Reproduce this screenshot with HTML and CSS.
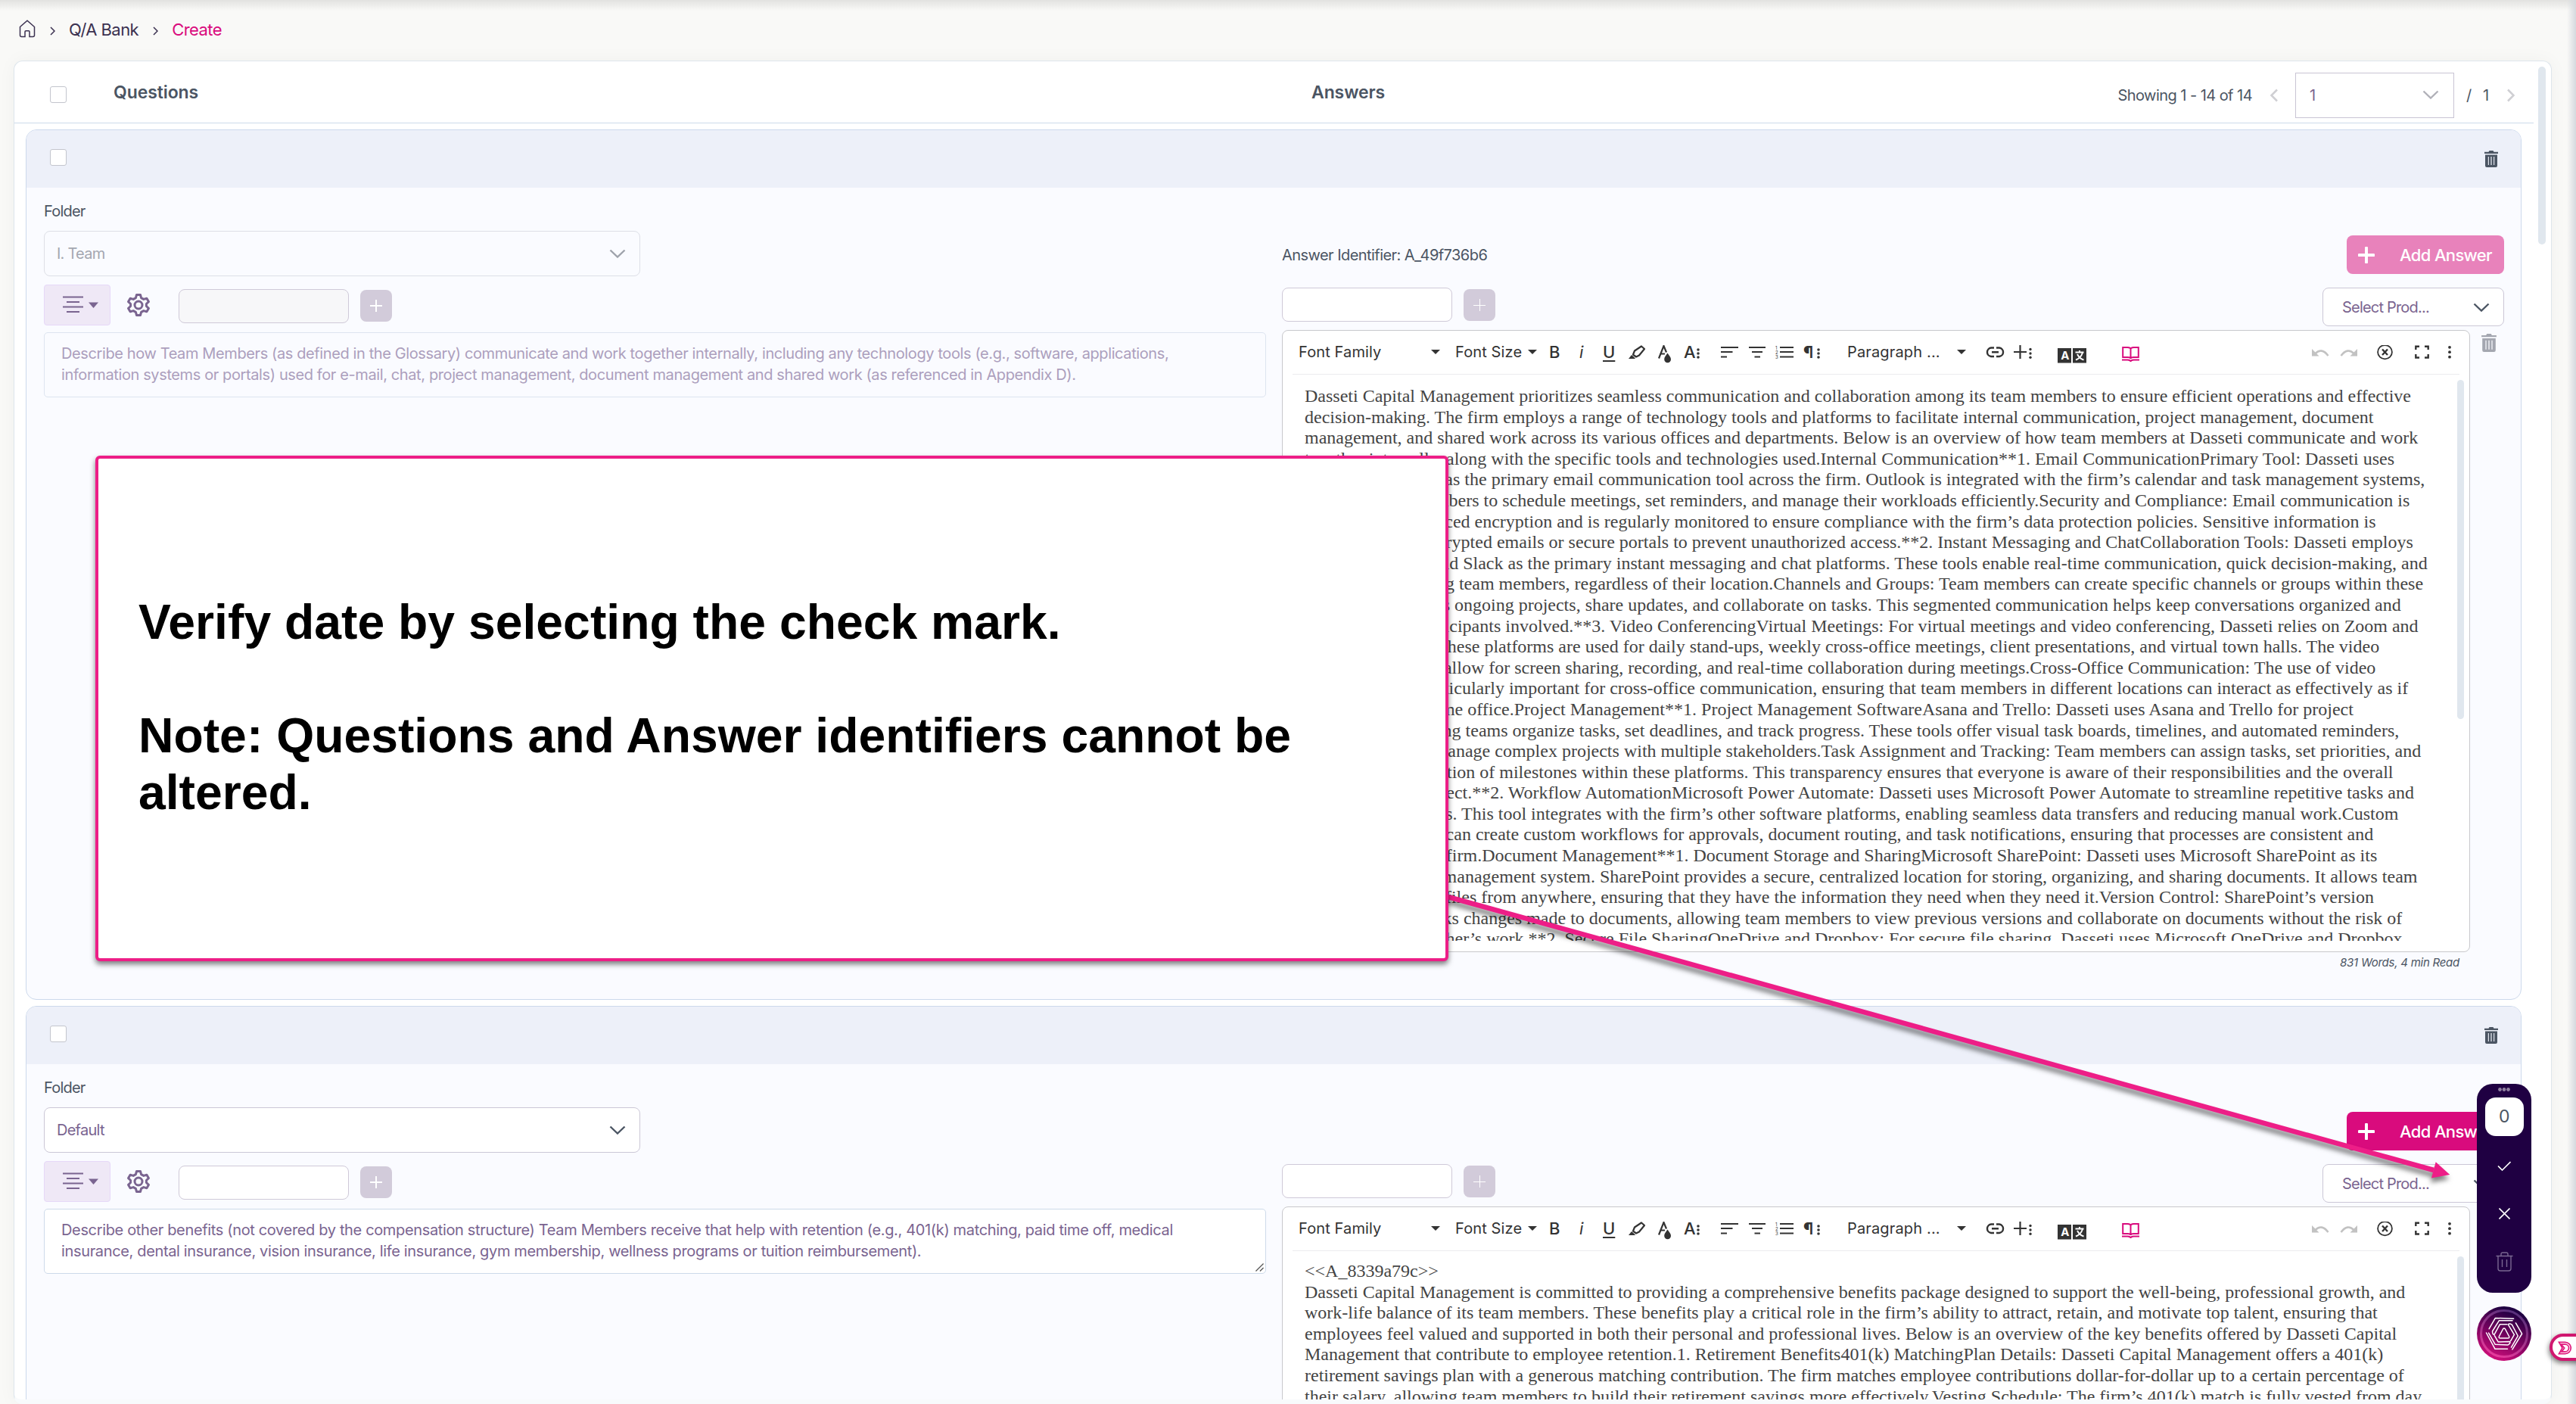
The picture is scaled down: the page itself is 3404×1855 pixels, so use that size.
FILE: index.html
```html
<!DOCTYPE html>
<html lang="en">
<head>
    <meta charset="UTF-8">
    <meta name="viewport" content="width=device-width, initial-scale=1.0">
    <title>Q/A Bank - Create</title>
    <link rel="stylesheet" href="styles.css">
</head>
<body>
    <!-- icons used more than once -->
    <svg class="sprite">
        <symbol id="i-chevron" viewBox="0 0 22 12"><path d="M1.5 1.5L11 10.5L20.5 1.5"/></symbol>
        <symbol id="i-list" viewBox="0 0 47 22">
            <path d="M0 1.5H27M5 8H22M0 14.5H27M5 21H22" stroke="#7a6490" stroke-width="2"/>
            <path d="M34 8.5H47L40.5 16Z" fill="#7a6490"/>
        </symbol>
        <symbol id="i-gear" viewBox="0 0 30 30">
            <path d="M12.5 1.5H17.5L18.6 5.6L21.8 7.4L25.9 6.3L28.4 10.6L25.4 13.5V16.5L28.4 19.4L25.9 23.7L21.8 22.6L18.6 24.4L17.5 28.5H12.5L11.4 24.4L8.2 22.6L4.1 23.7L1.6 19.4L4.6 16.5V13.5L1.6 10.6L4.1 6.3L8.2 7.4L11.4 5.6Z" stroke-linejoin="round"/>
            <circle cx="15" cy="15" r="5"/>
        </symbol>
        <symbol id="i-trash" viewBox="0 0 20 22" preserveAspectRatio="none">
            <path d="M1 1.8H6.5L7.5 0H12.5L13.5 1.8H19V4H1Z"/>
            <path fill-rule="evenodd" d="M2 5.5H18V20Q18 22 16 22H4Q2 22 2 20ZM5.8 8V19H6.9V8ZM9.4 8V19H10.6V8ZM13.1 8V19H14.2V8Z"/>
        </symbol>
        <symbol id="i-caret" viewBox="0 0 12 6"><path d="M0 0H12L6 6Z" fill="#333"/></symbol>
        <symbol id="i-pen" viewBox="0 0 23 24">
            <path d="M0 18L4 13L9 17.5L8 18Z" fill="#333"/>
            <path d="M6 12.5L8 7.5L17 1.5L21 5L14 13.5L10 15.5Z" fill="none" stroke="#333" stroke-width="2.2" stroke-linejoin="round"/>
        </symbol>
        <symbol id="i-drop" viewBox="0 0 17 24">
            <path d="M1 17.5L7.5 1L11 9.5M3.5 11.5H9" fill="none" stroke="#333" stroke-width="2.2"/>
            <path d="M12.5 10.5C10 14 8.2 16 8.2 18.8A4.4 4.4 0 0 0 17 18.8C17 16 15 14 12.5 10.5Z" fill="#333"/>
        </symbol>
        <symbol id="i-dots3" viewBox="0 0 4 18"><circle cx="2" cy="6" r="1.8"/><circle cx="2" cy="11" r="1.8"/><circle cx="2" cy="16" r="1.8"/></symbol>
        <symbol id="i-left" viewBox="0 0 23 24"><path d="M0 3H23M0 9H15.5M0 15.5H8" stroke="#333" stroke-width="2.2"/></symbol>
        <symbol id="i-center" viewBox="0 0 22 24"><path d="M0 3H22M4 9H18M7.5 15.5H15" stroke="#333" stroke-width="2.2"/></symbol>
        <symbol id="i-num" viewBox="0 0 24 24">
            <path d="M6 3H24M6 9H24M6 15.5H24" stroke="#333" stroke-width="2.2"/>
            <text x="0" y="5.5" font-size="6">1</text><text x="0" y="11.7" font-size="6">2</text><text x="0" y="18" font-size="6">3</text>
        </symbol>
        <symbol id="i-link" viewBox="0 0 25 24">
            <path d="M11 3.5H7A5.8 5.8 0 0 0 7 15H11M14 3.5H18A5.8 5.8 0 0 1 18 15H14M8 9.2H17" fill="none" stroke="#333" stroke-width="2.4"/>
        </symbol>
        <symbol id="i-plusdots" viewBox="0 0 24 24">
            <path d="M8.5 0V18M0 9H17" stroke="#333" stroke-width="2.2"/>
            <g fill="#333"><circle cx="22" cy="5.5" r="1.7"/><circle cx="22" cy="11" r="1.7"/><circle cx="22" cy="16.2" r="1.7"/></g>
        </symbol>
        <symbol id="i-translate" viewBox="0 0 38 24">
            <rect x="0" y="4" width="18" height="19.5" fill="#333"/><rect x="20" y="4" width="18" height="19.5" fill="#333"/>
            <text x="4.2" y="19" font-size="15" font-weight="700" fill="#fff">A</text>
            <path d="M23.5 9.5H34.5M29 7V9.5M33 10C31.5 14.5 28 18 24 19.5M26 12C28 16 31 18.5 34.5 19.5" fill="none" stroke="#fff" stroke-width="1.9"/>
        </symbol>
        <symbol id="i-book" viewBox="0 0 23 24">
            <path d="M1.2 3H7.5Q11.5 3 11.5 5.5Q11.5 3 15.5 3H21.8V16H15.5Q11.5 16 11.5 18Q11.5 16 7.5 16H1.2ZM11.5 5V18M0 19.5H7.5Q11.5 19.5 11.5 22Q11.5 19.5 15.5 19.5H23" fill="none" stroke="#d90b7d" stroke-width="2"/>
        </symbol>
        <symbol id="i-undo" viewBox="0 0 23 24">
            <path d="M4 11.5Q13 2.5 21.5 14" fill="none" stroke="#c2c2c2" stroke-width="2.6"/><path d="M0 5V14.5H9.5Z" fill="#c2c2c2"/>
        </symbol>
        <symbol id="i-clear" viewBox="0 0 21 24">
            <ellipse cx="10.5" cy="9.2" rx="9.4" ry="9.2" fill="none" stroke="#333" stroke-width="1.8"/>
            <path d="M7 5.5L14 13M14 5.5L7 13" stroke="#333" stroke-width="2.4"/>
        </symbol>
        <symbol id="i-full" viewBox="0 0 19 24"><path d="M1.3 6V1.8H6M13 1.8H17.7V6M17.7 12V16.5H13M6 16.5H1.3V12" fill="none" stroke="#333" stroke-width="2.4"/></symbol>
        <symbol id="i-more" viewBox="0 0 4 24"><circle cx="2" cy="2.8" r="1.9"/><circle cx="2" cy="9.2" r="1.9"/><circle cx="2" cy="15.7" r="1.9"/></symbol>
    </svg>

    <nav class="breadcrumb">
        <svg class="home" viewBox="0 0 22 24"><path d="M1.5 9.5L11 1.2L20.5 9.5V20.5Q20.5 22.5 18.5 22.5H14V16Q14 14.8 12.8 14.8H9.2Q8 14.8 8 16V22.5H3.5Q1.5 22.5 1.5 20.5Z"/></svg>
        <svg class="sep" viewBox="0 0 7 12"><path d="M1 1L6 6L1 11"/></svg>
        <span>Q/A Bank</span>
        <svg class="sep" viewBox="0 0 7 12"><path d="M1 1L6 6L1 11"/></svg>
        <span class="current">Create</span>
    </nav>

    <main class="panel">
        <header class="list-head">
            <span class="check"></span>
            <h2 class="head-questions">Questions</h2>
            <h2 class="head-answers">Answers</h2>
            <div class="pager">
                <span class="showing">Showing 1 - 14 of 14</span>
                <svg class="page-arrow" viewBox="0 0 12 18"><path d="M10 1.5L2.5 9L10 16.5"/></svg>
                <div class="page-select"><span>1</span><svg class="chevron"><use href="#i-chevron"/></svg></div>
                <span class="page-total">/&nbsp; &nbsp;1</span>
                <svg class="page-arrow next" viewBox="0 0 12 18"><path d="M2 1.5L9.5 9L2 16.5"/></svg>
            </div>
        </header>

        <section class="card disabled">
            <div class="card-head">
                <span class="check"></span>
                <svg class="trash"><use href="#i-trash"/></svg>
            </div>
            <div class="card-body">
                <div class="question">
                    <label>Folder</label>
                    <div class="folder-select"><span>I. Team</span><svg class="chevron"><use href="#i-chevron"/></svg></div>
                    <div class="q-tools">
                        <span class="list-btn"><svg><use href="#i-list"/></svg></span>
                        <svg class="gear"><use href="#i-gear"/></svg>
                        <span class="tag-input"></span>
                        <span class="tag-add"></span>
                    </div>
                    <div class="q-text">Describe how Team Members (as defined in the Glossary) communicate and work together internally, including any technology tools (e.g., software, applications,<br>information systems or portals) used for e-mail, chat, project management, document management and shared work (as referenced in Appendix D).</div>
                </div>
                <div class="answer">
                    <div class="a-top">
                        <span class="identifier">Answer Identifier: A_49f736b6</span>
                        <span class="add-answer"><svg viewBox="0 0 22 22"><path d="M11 1.5V20.5M1.5 11H20.5"/></svg>Add Answer</span>
                    </div>
                    <div class="a-tools">
                        <span class="tag-input"></span>
                        <span class="tag-add thin"></span>
                        <span class="product-select">Select Prod...<svg class="chevron"><use href="#i-chevron"/></svg></span>
                    </div>
                    <div class="editor-row">
                        <div class="editor">
                            <div class="toolbar">
                                <span class="t-family">Font Family<svg class="caret"><use href="#i-caret"/></svg></span>
                                <span class="t-size">Font Size<svg class="caret"><use href="#i-caret"/></svg></span>
                                <b class="t-b">B</b><i class="t-i">i</i><u class="t-u">U</u>
                                <svg class="t-pen"><use href="#i-pen"/></svg>
                                <svg class="t-drop"><use href="#i-drop"/></svg>
                                <span class="t-a">A<svg><use href="#i-dots3"/></svg></span>
                                <svg class="t-left"><use href="#i-left"/></svg>
                                <svg class="t-center"><use href="#i-center"/></svg>
                                <svg class="t-num"><use href="#i-num"/></svg>
                                <span class="t-a t-para">&para;<svg><use href="#i-dots3"/></svg></span>
                                <span class="t-format">Paragraph ...<svg class="caret"><use href="#i-caret"/></svg></span>
                                <svg class="t-link"><use href="#i-link"/></svg>
                                <svg class="t-plus"><use href="#i-plusdots"/></svg>
                                <svg class="t-trans"><use href="#i-translate"/></svg>
                                <svg class="t-book"><use href="#i-book"/></svg>
                                <svg class="t-undo"><use href="#i-undo"/></svg>
                                <svg class="t-redo"><use href="#i-undo"/></svg>
                                <svg class="t-clear"><use href="#i-clear"/></svg>
                                <svg class="t-full"><use href="#i-full"/></svg>
                                <svg class="t-more"><use href="#i-more"/></svg>
                            </div>
                            <div class="editor-body">
                                <p>Dasseti Capital Management prioritizes seamless communication and collaboration among its team members to ensure efficient operations and effective<br>
                                decision-making. The firm employs a range of technology tools and platforms to facilitate internal communication, project management, document<br>
                                management, and shared work across its various offices and departments. Below is an overview of how team members at Dasseti communicate and work<br>
                                together internally, along with the specific tools and technologies used.Internal Communication**1. Email CommunicationPrimary Tool: Dasseti uses<br>
                                Microsoft Outlook as the primary email communication tool across the firm. Outlook is integrated with the firm’s calendar and task management systems,<br>
                                allowing team members to schedule meetings, set reminders, and manage their workloads efficiently.Security and Compliance: Email communication is<br>
                                secured with advanced encryption and is regularly monitored to ensure compliance with the firm’s data protection policies. Sensitive information is<br>
                                delivered using encrypted emails or secure portals to prevent unauthorized access.**2. Instant Messaging and ChatCollaboration Tools: Dasseti employs<br>
                                Microsoft Teams and Slack as the primary instant messaging and chat platforms. These tools enable real-time communication, quick decision-making, and<br>
                                collaboration among team members, regardless of their location.Channels and Groups: Team members can create specific channels or groups within these<br>
                                platforms to discuss ongoing projects, share updates, and collaborate on tasks. This segmented communication helps keep conversations organized and<br>
                                available to all participants involved.**3. Video ConferencingVirtual Meetings: For virtual meetings and video conferencing, Dasseti relies on Zoom and<br>
                                Microsoft Teams. These platforms are used for daily stand-ups, weekly cross-office meetings, client presentations, and virtual town halls. The video<br>
                                conferencing tools allow for screen sharing, recording, and real-time collaboration during meetings.Cross-Office Communication: The use of video<br>
                                conferencing is particularly important for cross-office communication, ensuring that team members in different locations can interact as effectively as if<br>
                                they were in the same office.Project Management**1. Project Management SoftwareAsana and Trello: Dasseti uses Asana and Trello for project<br>
                                management, helping teams organize tasks, set deadlines, and track progress. These tools offer visual task boards, timelines, and automated reminders,<br>
                                making it easy to manage complex projects with multiple stakeholders.Task Assignment and Tracking: Team members can assign tasks, set priorities, and<br>
                                monitor the completion of milestones within these platforms. This transparency ensures that everyone is aware of their responsibilities and the overall<br>
                                progress of the project.**2. Workflow AutomationMicrosoft Power Automate: Dasseti uses Microsoft Power Automate to streamline repetitive tasks and<br>
                                staff work processes. This tool integrates with the firm’s other software platforms, enabling seamless data transfers and reducing manual work.Custom<br>
                                Workflows: Teams can create custom workflows for approvals, document routing, and task notifications, ensuring that processes are consistent and<br>
                                efficient across the firm.Document Management**1. Document Storage and SharingMicrosoft SharePoint: Dasseti uses Microsoft SharePoint as its<br>
                                primary document management system. SharePoint provides a secure, centralized location for storing, organizing, and sharing documents. It allows team<br>
                                members to access files from anywhere, ensuring that they have the information they need when they need it.Version Control: SharePoint’s version<br>
                                control feature tracks changes made to documents, allowing team members to view previous versions and collaborate on documents without the risk of<br>
                                overwriting each other’s work.**2. Secure File SharingOneDrive and Dropbox: For secure file sharing, Dasseti uses Microsoft OneDrive and Dropbox</p>
                                <span class="scroll"></span>
                            </div>
                        </div>
                        <svg class="trash side"><use href="#i-trash"/></svg>
                    </div>
                    <div class="words">831 Words, 4 min Read</div>
                </div>
            </div>
        </section>

        <section class="card">
            <div class="card-head">
                <span class="check"></span>
                <svg class="trash"><use href="#i-trash"/></svg>
            </div>
            <div class="card-body">
                <div class="question">
                    <label>Folder</label>
                    <div class="folder-select"><span>Default</span><svg class="chevron"><use href="#i-chevron"/></svg></div>
                    <div class="q-tools">
                        <span class="list-btn"><svg><use href="#i-list"/></svg></span>
                        <svg class="gear"><use href="#i-gear"/></svg>
                        <span class="tag-input"></span>
                        <span class="tag-add"></span>
                    </div>
                    <div class="q-text">Describe other benefits (not covered by the compensation structure) Team Members receive that help with retention (e.g., 401(k) matching, paid time off, medical<br>insurance, dental insurance, vision insurance, life insurance, gym membership, wellness programs or tuition reimbursement).
                        <svg class="grip" viewBox="0 0 12 12"><path d="M0.5 11.5L11.5 0.5M6.5 11.5L11.5 6.5"/></svg>
                    </div>
                </div>
                <div class="answer">
                    <div class="a-top">
                        <span class="identifier"></span>
                        <span class="add-answer"><svg viewBox="0 0 22 22"><path d="M11 1.5V20.5M1.5 11H20.5"/></svg>Add Answer</span>
                    </div>
                    <div class="a-tools">
                        <span class="tag-input"></span>
                        <span class="tag-add thin"></span>
                        <span class="product-select">Select Prod...<svg class="chevron"><use href="#i-chevron"/></svg></span>
                    </div>
                    <div class="editor-row">
                        <div class="editor">
                            <div class="toolbar">
                                <span class="t-family">Font Family<svg class="caret"><use href="#i-caret"/></svg></span>
                                <span class="t-size">Font Size<svg class="caret"><use href="#i-caret"/></svg></span>
                                <b class="t-b">B</b><i class="t-i">i</i><u class="t-u">U</u>
                                <svg class="t-pen"><use href="#i-pen"/></svg>
                                <svg class="t-drop"><use href="#i-drop"/></svg>
                                <span class="t-a">A<svg><use href="#i-dots3"/></svg></span>
                                <svg class="t-left"><use href="#i-left"/></svg>
                                <svg class="t-center"><use href="#i-center"/></svg>
                                <svg class="t-num"><use href="#i-num"/></svg>
                                <span class="t-a t-para">&para;<svg><use href="#i-dots3"/></svg></span>
                                <span class="t-format">Paragraph ...<svg class="caret"><use href="#i-caret"/></svg></span>
                                <svg class="t-link"><use href="#i-link"/></svg>
                                <svg class="t-plus"><use href="#i-plusdots"/></svg>
                                <svg class="t-trans"><use href="#i-translate"/></svg>
                                <svg class="t-book"><use href="#i-book"/></svg>
                                <svg class="t-undo"><use href="#i-undo"/></svg>
                                <svg class="t-redo"><use href="#i-undo"/></svg>
                                <svg class="t-clear"><use href="#i-clear"/></svg>
                                <svg class="t-full"><use href="#i-full"/></svg>
                                <svg class="t-more"><use href="#i-more"/></svg>
                            </div>
                            <div class="editor-body second">
                                <p>&lt;&lt;A_8339a79c&gt;&gt;<br>
                                Dasseti Capital Management is committed to providing a comprehensive benefits package designed to support the well-being, professional growth, and<br>
                                work-life balance of its team members. These benefits play a critical role in the firm’s ability to attract, retain, and motivate top talent, ensuring that<br>
                                employees feel valued and supported in both their personal and professional lives. Below is an overview of the key benefits offered by Dasseti Capital<br>
                                Management that contribute to employee retention.1. Retirement Benefits401(k) MatchingPlan Details: Dasseti Capital Management offers a 401(k)<br>
                                retirement savings plan with a generous matching contribution. The firm matches employee contributions dollar-for-dollar up to a certain percentage of<br>
                                their salary, allowing team members to build their retirement savings more effectively.Vesting Schedule: The firm’s 401(k) match is fully vested from day</p>
                                <span class="scroll"></span>
                            </div>
                        </div>
                    </div>
                </div>
            </div>
        </section>
        <span class="page-scroll"></span>
    </main>

    <div class="edge-shade"></div>

    <!-- floating review actions -->
    <aside class="actions">
        <svg class="grab" viewBox="0 0 16 5"><circle cx="2.5" cy="2.5" r="2.4"/><circle cx="8" cy="2.5" r="2.4"/><circle cx="13.5" cy="2.5" r="2.4"/></svg>
        <span class="count">0</span>
        <svg class="act-check" viewBox="0 0 18 13"><path d="M1 6.5L6.5 12L17.5 1"/></svg>
        <svg class="act-close" viewBox="0 0 15 15"><path d="M0.5 0.5L14.5 14.5M14.5 0.5L0.5 14.5"/></svg>
        <svg class="act-trash" viewBox="0 0 23 26"><path d="M0.5 5.5H22.5M7 5.5V3Q7 1 9 1H14Q16 1 16 3V5.5M3 5.5V22Q3 25 6 25H17Q20 25 20 22V5.5M8.5 10V20M14.5 10V20"/></svg>
    </aside>
    <svg class="logo" viewBox="-36 -36 72 72">
        <defs>
            <linearGradient id="lg" x1="0.7" y1="0" x2="0.3" y2="1"><stop offset="0.1" stop-color="#1f0042"/><stop offset="0.55" stop-color="#7a0260"/><stop offset="1" stop-color="#d4107c"/></linearGradient>
            <linearGradient id="ring" x1="0.7" y1="0" x2="0.3" y2="1"><stop offset="0" stop-color="#54307a"/><stop offset="1" stop-color="#e83a9c"/></linearGradient>
            <g id="arm">
                <path d="M-23.5 -1L-12 20.3H4.5"/>
                <path d="M11 -17.3H-6.5L-15.5 -3Q-15.5 1.3 -13 1.3L-5.5 -12.3H4"/>
            </g>
        </defs>
        <circle r="36" fill="url(#lg)"/>
        <circle r="30.5" fill="none" stroke="url(#ring)" stroke-width="3"/>
        <g fill="none" stroke="#fff" stroke-width="1.5" stroke-linejoin="round" stroke-linecap="round">
            <use href="#arm"/><use href="#arm" transform="rotate(120)"/><use href="#arm" transform="rotate(240)"/>
            <path d="M0 -7Q1 -7 1.500 -6L6.500 3.500Q7.500 6 5 6H-5Q-7.500 6 -6.500 3.500L-1.500 -6Q-1 -7 0 -7Z"/>
        </g>
    </svg>
    <div class="side-badge">
        <svg viewBox="0 0 22 20"><path d="M1 1.5H10A8.5 8.5 0 0 1 10 18.5H1L6 10ZM4 4.5H10A5.5 5.5 0 0 1 10 15.5H5L9 10Z"/></svg>
    </div>

    <!-- annotation -->
    <svg class="arrow" viewBox="0 0 3404 1855">
        <path class="line" d="M1910 1184L3216 1546"/>
        <path class="tip" d="M3234 1551L3215 1554.5L3219.500 1538Z"/>
    </svg>
    <div class="callout">
        <p>Verify date by selecting the check mark.</p>
        <p>Note: Questions and Answer identifiers cannot be altered.</p>
    </div>
</body>
</html>
```

FILE: styles.css
```css
*{
    box-sizing: border-box;
}
body{
    margin: 0;
    height: 1855px;
    overflow: hidden;
    background: linear-gradient(#e2e2e0, #f9f9f7 14px);
    font-family: Inter, "Liberation Sans", sans-serif;
    font-size: 20px;
    line-height: 24px;
    letter-spacing: -0.55px;
    color: #4b5563;
    position: relative;
}
.sprite{
    display: none;
}
svg{
    display: block;
    flex: none;
}
h2, p{
    margin: 0;
}

/* breadcrumb */
.breadcrumb{
    height: 80px;
    padding: 0 0 2px 25px;
    display: flex;
    align-items: center;
    font-size: 22px;
    letter-spacing: -0.55px;
    color: #3b3150;
}
.breadcrumb svg{
    fill: none;
    stroke: #3b3150;
    stroke-width: 1.5;
}
.home{
    width: 22px;
    height: 24px;
    margin-top: -3px;
}
.breadcrumb .sep{
    width: 7px;
    height: 12px;
    margin: 4px 18.5px 0;
}
.current{
    color: #d90b7d;
}

/* panel */
.panel{
    position: relative;
    margin-left: 18px;
    width: 3354px;
    height: 1775px;
    padding-left: 15px;
    background: #fff;
    border: 1px solid #dde5ec;
    border-bottom: 6px solid #f8fafc;
    border-radius: 12px;
    box-shadow: 0 0 24px rgba(0,0,0,0.04);
    overflow: hidden;
}
.list-head{
    height: 82px;
    width: 3329px;
    margin-left: -15px;
    padding: 0 24px 0 47px;
    display: flex;
    align-items: center;
    border-bottom: 1px solid #cddaea;
}
.check{
    width: 22px;
    height: 22px;
    border: 1px solid #c3c5cd;
    border-radius: 3px;
    background: #fff;
}
.list-head .check{
    margin-top: 6px;
}
.list-head h2{
    font-size: 23px;
    font-weight: 600;
    letter-spacing: -0.1px;
    line-height: 28px;
}
.head-questions{
    margin-left: 62px;
    width: 1583px;
}
.pager{
    margin-left: auto;
    padding-top: 8px;
    display: flex;
    align-items: center;
}
.showing{
    margin-right: 23px;
}
.page-arrow{
    width: 12px;
    height: 18px;
    fill: none;
    stroke: #cfcfd3;
    stroke-width: 2.5;
}
.page-select{
    width: 210px;
    height: 60px;
    margin: 0 16px 0 22px;
    padding: 0 19px 0 18px;
    display: flex;
    align-items: center;
    justify-content: space-between;
    border: 1px solid #c8c4d4;
    color: #7a6490;
}
.page-total{
    width: 37px;
    margin-right: 16px;
}
.chevron{
    width: 22px;
    height: 12px;
    fill: none;
    stroke: #4b5563;
    stroke-width: 2.4;
}
.page-select .chevron{
    stroke: #b0b0b8;
    margin-bottom: 2px;
}
.page-scroll{
    position: absolute;
    top: 7px;
    right: 7px;
    width: 10px;
    height: 235px;
    border-radius: 5px;
    background: #e0e7ee;
}

/* cards */
.card{
    width: 3298px;
    height: 1150px;
    margin-top: 8px;
    border: 1px solid #ccd9ec;
    border-radius: 14px;
    background: #fafbff;
    overflow: hidden;
}
.card-head{
    height: 76px;
    padding: 0 29px 0 31px;
    display: flex;
    align-items: center;
    justify-content: space-between;
    background: #edf0f9;
}
.card-head .check{
    margin-bottom: 5px;
}
.trash{
    width: 20px;
    height: 22px;
    fill: #4b5563;
}
.card-body{
    display: flex;
    padding-left: 23px;
}
.question{
    width: 1615px;
    padding-top: 19px;
}
.question label{
    display: block;
    letter-spacing: -0.8px;
}
.folder-select{
    width: 788px;
    height: 60px;
    margin-top: 14px;
    padding: 0 18px 0 16px;
    display: flex;
    align-items: center;
    justify-content: space-between;
    border: 1px solid #cbc7d6;
    border-radius: 8px;
    background: #fff;
    color: #7a6490;
    letter-spacing: -0.75px;
}
.disabled .folder-select{
    background: #fafbff;
    border-color: #dddfe6;
    color: #a4a7b0;
}
.disabled .folder-select .chevron{
    stroke: #9ea2ab;
}
.q-tools{
    height: 54px;
    margin-top: 11px;
    display: flex;
    align-items: center;
}
.list-btn{
    width: 88px;
    height: 54px;
    padding: 14px 0 0 24px;
    background: #efe8f6;
    border: 1px solid #e6d8f8;
    border-radius: 4px;
}
.list-btn svg{
    width: 47px;
    height: 22px;
}
.gear{
    width: 30px;
    height: 30px;
    margin: 0 38px 0 22px;
    fill: none;
    stroke: #7a6490;
    stroke-width: 3;
}
.tag-input{
    width: 225px;
    height: 45px;
    border: 1px solid #cfc9d8;
    border-radius: 8px;
    background: #fff;
}
.disabled .question .tag-input{
    background: #f7f7f9;
}
.tag-add{
    width: 42px;
    height: 42px;
    margin-left: 15px;
    border-radius: 8px;
    background:
        linear-gradient(#fff, #fff) center / 16px 2px no-repeat,
        linear-gradient(#fff, #fff) center / 2px 16px no-repeat,
        #d2cbda;
}
.q-tools .tag-input, .q-tools .tag-add{
    margin-top: 2px;
}
.tag-add.thin{
    background:
        linear-gradient(#fff, #fff) center / 16px 1px no-repeat,
        linear-gradient(#fff, #fff) center / 1px 16px no-repeat,
        #d2cbda;
}
.q-text{
    position: relative;
    height: 86px;
    margin-top: 9px;
    padding: 14px 0 0 22px;
    border: 1px solid #cddaea;
    border-radius: 5px;
    background: #fff;
    color: #7a6490;
    line-height: 27.6px;
    letter-spacing: -0.35px;
    white-space: nowrap;
}
.disabled .q-text{
    background: #fafbff;
    border-color: #dde4f0;
    color: #ac9fbd;
    letter-spacing: -0.39px;
}
.grip{
    position: absolute;
    right: 2px;
    bottom: 2px;
    width: 11px;
    height: 11px;
    stroke: #555;
    stroke-width: 1.4;
}

/* answer column */
.answer{
    width: 1615px;
    margin-left: 21px;
    padding-top: 63px;
}
.a-top{
    height: 51px;
    display: flex;
    align-items: center;
    justify-content: space-between;
}
.add-answer{
    width: 208px;
    height: 51px;
    padding: 0 0 0 15px;
    display: flex;
    align-items: center;
    border-radius: 8px;
    background: #d90b7d;
    color: #fff;
    font-size: 22px;
    font-weight: 500;
    letter-spacing: -0.65px;
}
.disabled .add-answer{
    background: #e882bb;
}
.add-answer svg{
    width: 22px;
    height: 22px;
    margin-right: 33px;
    fill: none;
    stroke: #fff;
    stroke-width: 4;
    stroke-linecap: round;
}
.a-tools{
    height: 51px;
    margin-top: 18px;
    display: flex;
    align-items: flex-start;
}
.a-tools .tag-add{
    margin-top: 2px;
}
.product-select{
    width: 240px;
    height: 51px;
    margin-left: auto;
    padding: 0 18px 0 25px;
    display: flex;
    align-items: center;
    justify-content: space-between;
    border: 1px solid #cbc7d6;
    border-radius: 8px;
    background: #fff;
    color: #7a6490;
    letter-spacing: -0.8px;
}
.editor-row{
    display: flex;
    margin-top: 5px;
}
.trash.side{
    width: 22px;
    height: 24px;
    margin: 5px 0 0 14px;
    fill: #a4a7b0;
}
.editor{
    width: 1570px;
    height: 822px;
    border: 1px solid #c8c8cc;
    border-radius: 8px;
    background: #fff;
}
.words{
    width: 1556px;
    margin-top: 2px;
    text-align: right;
    font-size: 15px;
    font-style: italic;
    letter-spacing: -0.25px;
}

/* editor toolbar */
.toolbar{
    height: 58px;
    margin: 0 13px;
    padding: 0 11px 2px 8px;
    display: flex;
    align-items: center;
    border-bottom: 1px solid #ececee;
    color: #333;
    fill: #333;
    letter-spacing: 0.12px;
}
.toolbar > svg{
    height: 24px;
    margin-top: 6px;
}
.toolbar text{
    font-family: "Liberation Sans", sans-serif;
}
.toolbar .caret{
    width: 12px;
    height: 6px;
}
.t-family, .t-size, .t-format{
    display: flex;
    align-items: center;
    justify-content: space-between;
    white-space: nowrap;
}
.t-family{
    width: 187px;
}
.t-size{
    width: 108px;
    margin-left: 20px;
}
.t-b, .t-i, .t-u, .t-a{
    font-size: 22px;
    font-weight: 500;
    letter-spacing: 0;
}
.t-b{
    width: 15px;
    margin-left: 16px;
}
.t-i{
    width: 9px;
    margin-left: 25px;
    font-weight: 400;
}
.t-u{
    width: 18px;
    margin-left: 22px;
    text-underline-offset: 3px;
    text-decoration-thickness: 2px;
}
.t-pen{
    width: 23px;
    margin-left: 16px;
}
.t-drop{
    width: 17px;
    margin-left: 16px;
}
.t-a{
    width: 21px;
    margin-left: 17px;
    display: flex;
    justify-content: space-between;
    align-items: center;
}
.t-a svg{
    width: 4px;
    height: 18px;
}
.t-left{
    width: 23px;
    margin-left: 28px;
}
.t-center{
    width: 22px;
    margin-left: 14px;
}
.t-num{
    width: 24px;
    margin-left: 13px;
}
.t-para{
    width: 22px;
    margin-left: 13px;
    font-weight: 700;
}
.t-format{
    width: 157px;
    margin-left: 36px;
    letter-spacing: 0.15px;
}
.t-link{
    width: 25px;
    margin-left: 26px;
}
.t-plus{
    width: 24px;
    margin-left: 12px;
}
.t-trans{
    width: 38px;
    margin-left: 34px;
}
.t-book{
    width: 23px;
    margin-left: 47px;
}
.t-undo{
    width: 23px;
    margin-left: auto;
}
.t-redo{
    width: 23px;
    margin-left: 14px;
    transform: scaleX(-1);
}
.t-clear{
    width: 21px;
    margin-left: 26px;
}
.t-full{
    width: 19px;
    margin-left: 29px;
}
.t-more{
    width: 4px;
    margin-left: 25px;
}

.editor-body{
    height: 748px;
    padding: 15px 7px 0 29px;
    display: flex;
    justify-content: space-between;
    overflow: hidden;
    font-family: "Liberation Serif", serif;
    font-size: 24px;
    line-height: 27.6px;
    letter-spacing: 0;
    color: #444;
    white-space: nowrap;
}
.editor-body.second{
    padding-top: 13px;
}
.scroll{
    width: 9px;
    height: 448px;
    margin-top: -8px;
    border-radius: 5px;
    background: #e0e7ee;
}
.second .scroll{
    margin-top: -6px;
}

/* floating things */
.edge-shade{
    position: absolute;
    top: 0;
    right: 0;
    width: 12px;
    height: 1855px;
    background: linear-gradient(90deg, rgba(220,224,230,0), #d5d9de);
}
.actions{
    position: absolute;
    left: 3273px;
    top: 1432px;
    width: 72px;
    height: 276px;
    padding-top: 5px;
    display: flex;
    flex-direction: column;
    align-items: center;
    border-radius: 21px;
    background: #1f0042;
}
.actions svg{
    fill: none;
    stroke: #fff;
    stroke-width: 1.6;
}
.actions .grab{
    width: 16px;
    height: 5px;
    fill: #8f80a0;
    stroke: none;
}
.count{
    width: 51px;
    height: 51px;
    margin-top: 8px;
    border-radius: 14px;
    background: #fff;
    text-align: center;
    font-size: 23px;
    line-height: 51px;
}
.act-check{
    width: 18px;
    height: 13px;
    margin-top: 33px;
}
.act-close{
    width: 15px;
    height: 15px;
    margin-top: 49px;
}
.actions .act-trash{
    width: 23px;
    height: 26px;
    margin-top: 43px;
    stroke: #796791;
    stroke-width: 1.4;
}
.logo{
    position: absolute;
    left: 3273px;
    top: 1726px;
    width: 72px;
    height: 72px;
}
.side-badge{
    position: absolute;
    left: 3369px;
    top: 1762px;
    width: 60px;
    height: 36px;
    padding: 6px 0 0 7px;
    border: 4px solid #d0176f;
    border-radius: 18px;
    background: #fff;
    box-shadow: -1px 3px 6px rgba(0,0,0,0.5);
}
.side-badge svg{
    width: 21px;
    height: 18px;
    fill: none;
    stroke: #e0187c;
    stroke-width: 1.9;
}

/* annotation */
.callout{
    position: absolute;
    left: 126px;
    top: 602px;
    width: 1788px;
    height: 668px;
    padding: 179px 56px 0 53px;
    border: 4px solid #ed1e87;
    border-radius: 6px;
    background: #fff;
    box-shadow: 0 4px 7px rgba(0,0,0,0.5);
    font: bold 64.3px/75px "Liberation Sans", Arial, sans-serif;
    letter-spacing: 0;
    color: #000;
}
.callout p + p{
    margin-top: 75px;
}
.arrow{
    position: absolute;
    left: 0;
    top: 0;
    width: 3404px;
    height: 1855px;
    filter: drop-shadow(-1px 6px 3px rgba(0,0,0,0.5));
}
.arrow .line{
    stroke: #ed1e87;
    stroke-width: 6.5;
}
.arrow .tip{
    fill: #ed1e87;
    stroke: #ed1e87;
    stroke-width: 3;
}
```
